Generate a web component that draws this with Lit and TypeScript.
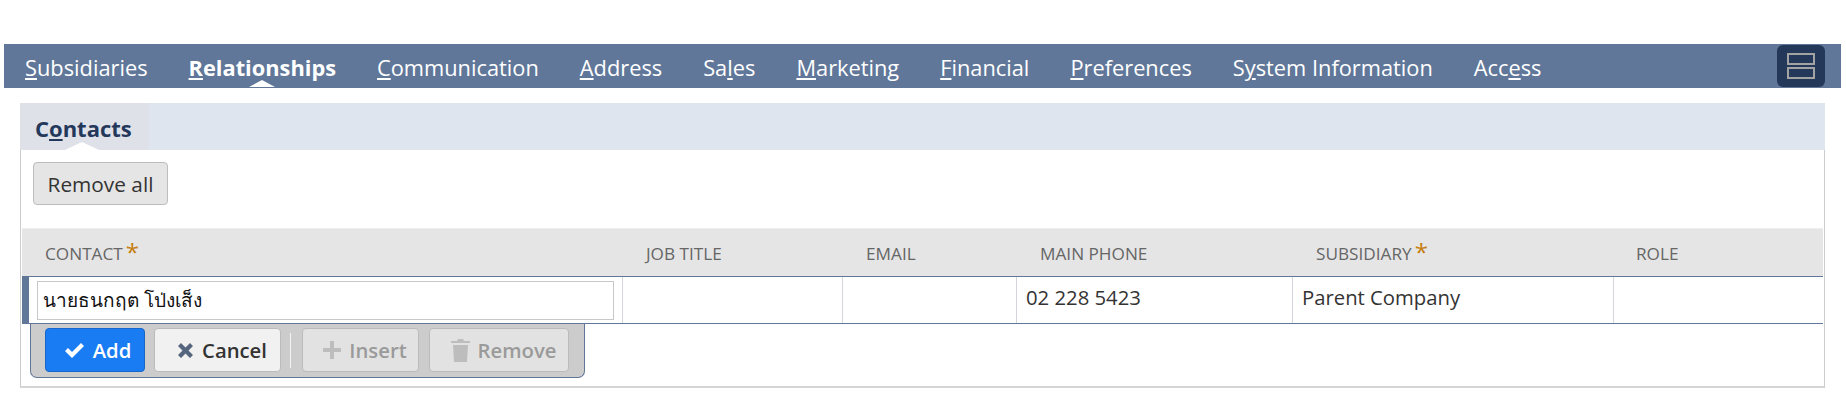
import { LitElement, html, css, nothing } from "lit";
import { customElement } from "lit/decorators.js";

const u = (t: string, i: number) => html`${t.slice(0, i)}<u>${t[i]}</u>${t.slice(i + 1)}`;

const tabs: [string, number][] = [
  ["Subsidiaries", 0], ["Relationships", 0], ["Communication", 0], ["Address", 0], ["Sales", 2],
  ["Marketing", 0], ["Financial", 0], ["Preferences", 0], ["System Information", 1], ["Access", 3],
];

const cols: { t: string; w: number; req?: boolean; v?: string; pad: number }[] = [
  { t: "CONTACT", w: 600, req: true, pad: 23 },
  { t: "JOB TITLE", w: 220, pad: 24 },
  { t: "EMAIL", w: 174, pad: 24 },
  { t: "MAIN PHONE", w: 276, v: "02 228 5423", pad: 24 },
  { t: "SUBSIDIARY", w: 321, req: true, v: "Parent Company", pad: 24 },
  { t: "ROLE", w: 210, pad: 23 },
];

@customElement("app-root")
export class AppRoot extends LitElement {
  static styles = css`
    :host { display: block; width: 1846px; height: 407px; background: #fff; font-family: "Open Sans", "Noto Sans", sans-serif; padding-top: 44px; box-sizing: border-box; }
    .bar { margin: 0 5px 0 4px; height: 44px; background: #607799; display: flex; align-items: stretch; padding: 0 16px 0 21px; }
    .tab { color: #fff; font-size: 21.8px; margin-right: 41px; line-height: 47px; position: relative; white-space: nowrap; }
    .tab.on { font-weight: 700; }
    .tab.on::after { content: ""; position: absolute; left: 50%; margin-left: -13px; bottom: 1px; border: 13px solid transparent; border-top: 0; border-bottom: 7px solid #fff; }
    .toggle { margin: 1px 0 1px auto; width: 48px; height: 42px; background: #243859; border-radius: 6px; display: flex; align-items: center; justify-content: center; }
    .panel { margin: 15px 21px 0 20px; height: 285px; border: 1px solid #ccc; border-top: 0; border-bottom: 2px solid #d5d5d5; background: #fff; box-sizing: border-box; }
    .subhead { margin: 0 -1px; height: 47px; background: #dfe5ef; display: flex; }
    .subtab { width: 129px; background: #dfe1e9; color: #24385b; font-weight: 700; font-size: 22px; line-height: 50px; padding-left: 15px; box-sizing: border-box; position: relative; }
    .subtab::after { content: ""; position: absolute; left: 45px; bottom: 0; border: 17.500px solid transparent; border-top: 0; border-bottom: 8px solid #fff; }
    .actions { padding: 12px 12px 23px; }
    .btn { display: inline-flex; align-items: center; justify-content: center; box-sizing: border-box; height: 44px; border: 1px solid #bdbdbd; border-radius: 4px; background: #e5e5e5; color: #333; font: 600 20.300px "Open Sans", sans-serif; gap: 8px; padding: 0 0 0 9px; flex: none; }
    .remove-all { display: flex; width: 135px; height: 43px; padding: 0; font-weight: 500; font-size: 20.800px; }
    .thead { display: flex; height: 48px; background: #e5e5e5; margin: 0 1px; border-top: 1px solid #eee; box-sizing: border-box; }
    .th { box-sizing: border-box; color: #666; font-size: 17.200px; line-height: 50px; white-space: nowrap; flex: none; }
    .star { color: #c57e0f; font-size: 24px; line-height: 20px; margin-left: 3px; position: relative; top: 1px; }
    .row { display: flex; height: 48px; margin: 0 1px; border-top: 1px solid #607799; border-bottom: 1px solid #607799; box-sizing: border-box; border-left: 7px solid #607799; }
    .td { box-sizing: border-box; border-left: 1px solid #d2d6dc; font-size: 20.300px; color: #333; line-height: 40px; padding-left: 9px; white-space: nowrap; flex: none; }
    .td.first { border-left: 0; padding: 4px 8px 0 8px; }
    .input { height: 39px; box-sizing: border-box; border: 1px solid #c8c8c8; background: #fff; color: #111; font: 19px/37px "Noto Sans", "Open Sans", sans-serif; padding-left: 5px; }
    .tools { margin-left: 9px; width: 555px; height: 54px; box-sizing: border-box; background: #ccc; border: 1px solid #607799; border-top: 0; border-radius: 0 0 7px 7px; display: flex; align-items: flex-start; padding: 4px 0 0 14px; }
    .add { width: 100px; background: #1a7cf2; border-color: #1766c8; color: #fff; margin-right: 9px; padding-left: 5px; gap: 8px; }
    .cancel { width: 127px; background: #f1f1f1; border-color: #bbb; color: #333; margin-right: 9px; }
    .sep { width: 1px; height: 35px; margin: 5px 11px 0 0; background: #f3f3f3; }
    .dis { color: #9a9a9a; border-color: #bbb; background: #e2e2e2; }
    .insert { width: 117px; margin-right: 10px; }
    .rm { width: 140px; }
    svg { display: block; }
  `;

  render() {
    return html`
      <div class="bar">
        ${tabs.map(([t, i]) => html`<span class="tab ${t === "Relationships" ? "on" : ""}">${u(t, i)}</span>`)}
        <div class="toggle">
          <svg width="28" height="28" viewBox="0 0 28 28" fill="none" stroke="#a3a3a3" stroke-width="2">
            <rect x="1" y="2" width="26" height="10"></rect>
            <rect x="1" y="16" width="26" height="10"></rect>
          </svg>
        </div>
      </div>
      <div class="panel">
        <div class="subhead"><div class="subtab">${u("Contacts", 1)}</div></div>
        <div class="actions"><button class="btn remove-all">Remove all</button></div>
        <div class="thead">
          ${cols.map((c) => html`<div class="th" style="width:${c.w}px;padding-left:${c.pad}px">${c.t}${c.req ? html`<span class="star">*</span>` : nothing}</div>`)}
        </div>
        <div class="row">
          <div class="td first" style="width:593px"><div class="input">นายธนกฤต โป่งเส็ง</div></div>
          ${cols.slice(1).map((c) => html`<div class="td" style="width:${c.w}px">${c.v ?? ""}</div>`)}
        </div>
        <div class="tools">
          <button class="btn add">
            <svg width="21" height="17" viewBox="0 0 21 17"><path d="M1 9l3-3 4 4 9-9 3 3-12 12z" fill="#fff"></path></svg>Add
          </button>
          <button class="btn cancel">
            <svg width="17" height="17" viewBox="0 0 17 17"><path d="M4 1l4.500 4.500L13 1l3 3-4.500 4.500L16 13l-3 3-4.500-4.500L4 16l-3-3 4.500-4.500L1 4z" fill="#54657d"></path></svg>Cancel
          </button>
          <div class="sep"></div>
          <button class="btn dis insert">
            <svg width="18" height="18" viewBox="0 0 18 18"><path d="M7 0h4v7h7v4h-7v7H7v-7H0V7h7z" fill="#bdbdbd"></path></svg>Insert
          </button>
          <button class="btn dis rm">
            <svg width="19" height="24" viewBox="0 0 19 24"><path d="M0 3h6l1-2h5l1 2h6v2H0zM2 7h15l-1 17H3z" fill="#bdbdbd"></path></svg>Remove
          </button>
        </div>
      </div>
    `;
  }
}
